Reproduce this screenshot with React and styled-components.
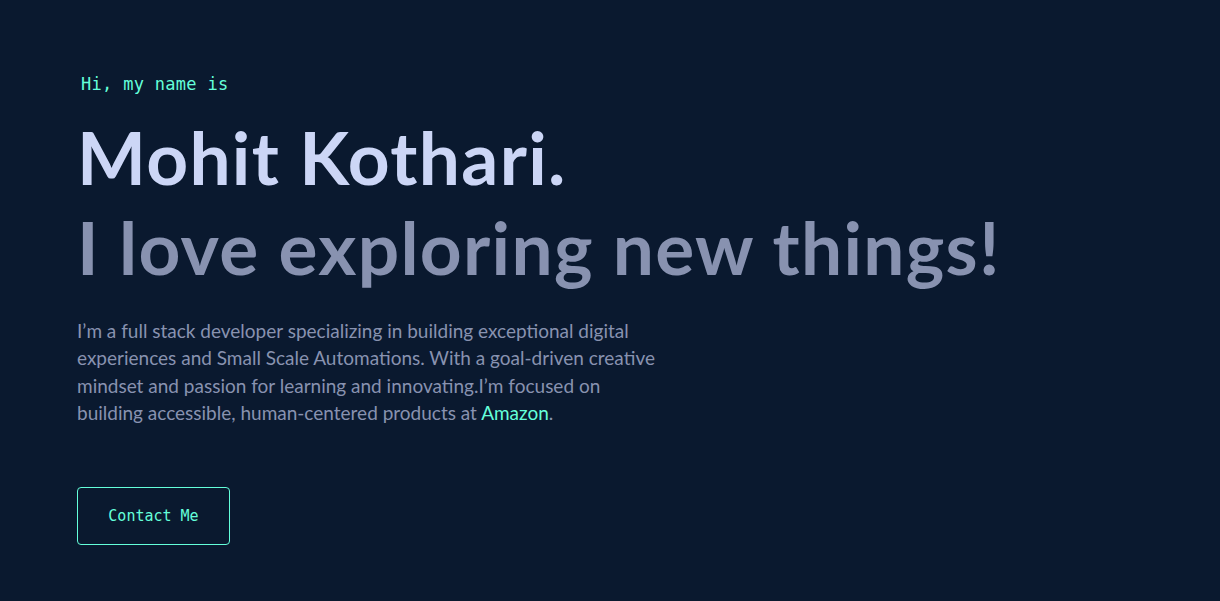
import React from "react";
import styled, { createGlobalStyle } from "styled-components";

const Global = createGlobalStyle`
  html, body { margin: 0; padding: 0; background: #0a192f; }
  #root { min-height: 100vh; }
  * { box-sizing: border-box; }
`;

const Page = styled.main`
  min-height: 601px;
  background: #0a192f;
  padding: 75px 77px 0 77px;
`;

const Hero = styled.section`
  display: flex;
  flex-direction: column;
  align-items: flex-start;
`;

const Intro = styled.h1`
  margin: 0 0 18px 4px;
  color: #64ffda;
  font-family: "DejaVu Sans Mono", "Liberation Mono", monospace;
  font-size: 17px;
  font-weight: 400;
  letter-spacing: 0.3px;
  line-height: 19px;
`;

const BigHeading = styled.h2`
  margin: 0;
  color: ${(p) => p.$color};
  font-family: Lato, "Liberation Sans", sans-serif;
  font-size: 73px;
  font-weight: 700;
  letter-spacing: 1.3px;
  line-height: 90px;
`;

const Para = styled.p`
  margin: 25px 0 0 0;
  color: #8892b0;
  font-family: Lato, "Liberation Sans", sans-serif;
  font-size: 19px;
  line-height: 27.3px;
`;

const Accent = styled.a`
  color: #64ffda;
  text-decoration: none;
`;

const ContactButton = styled.a`
  margin-top: 61px;
  display: inline-flex;
  align-items: center;
  justify-content: center;
  width: 153px;
  height: 58px;
  border: 1px solid #64ffda;
  border-radius: 4px;
  color: #64ffda;
  font-family: "DejaVu Sans Mono", "Liberation Mono", monospace;
  font-size: 15px;
  text-decoration: none;
`;

export default function App() {
  return (
    <>
      <Global />
      <Page>
        <Hero>
          <Intro>Hi, my name is</Intro>
          <BigHeading $color="#ccd6f6">Mohit Kothari.</BigHeading>
          <BigHeading $color="#8892b0">I love exploring new things!</BigHeading>
          <Para>
            I’m a full stack developer specializing in building exceptional digital
            <br />
            experiences and Small Scale Automations. With a goal-driven creative
            <br />
            mindset and passion for learning and innovating.I’m focused on
            <br />
            building accessible, human-centered products at <Accent href="#">Amazon</Accent>.
          </Para>
          <ContactButton href="#">Contact Me</ContactButton>
        </Hero>
      </Page>
    </>
  );
}
